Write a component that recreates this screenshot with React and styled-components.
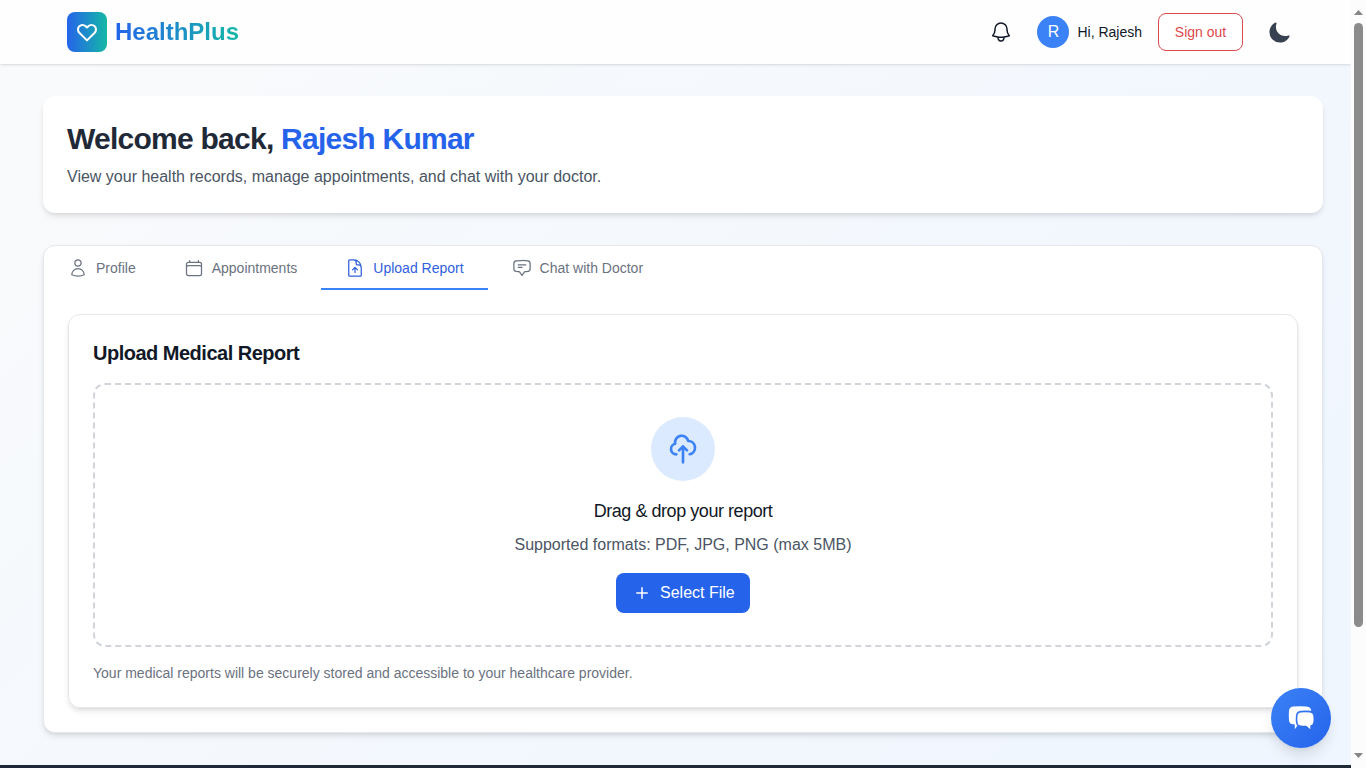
import React from 'react';
import styled, { createGlobalStyle, css } from 'styled-components';
import { HiOutlineHeart, HiOutlineCloudUpload } from 'react-icons/hi';
import {
  HiOutlineBell,
  HiOutlineUser,
  HiOutlineCalendar,
  HiOutlineDocumentArrowUp,
  HiOutlineChatBubbleBottomCenterText,
} from 'react-icons/hi2';
import { IoMoon } from 'react-icons/io5';

const GlobalStyle = createGlobalStyle`
  * { box-sizing: border-box; }
  body {
    margin: 0;
    overflow: hidden;
    font-family: "Liberation Sans", Arial, sans-serif;
    color: #111827;
  }
  h1, h2, h3, p { margin: 0; }
  button { font-family: inherit; cursor: pointer; }
  svg { display: block; flex: none; }
`;

const Window = styled.div`
  display: flex;
  height: 768px;
  overflow: hidden;
`;

const Page = styled.div`
  width: 1351px;
  display: flex;
  flex-direction: column;
  background: linear-gradient(135deg, #f9fafb, #eff6ff);
`;

const Header = styled.header`
  height: 64px;
  flex: none;
  padding: 0 60px 0 67px;
  display: flex;
  align-items: center;
  justify-content: space-between;
  background: #fefefe;
  box-shadow: 0 1px 3px rgba(0, 0, 0, 0.1), 0 1px 2px -1px rgba(0, 0, 0, 0.1);
`;

const Brand = styled.div`
  display: flex;
  align-items: center;
  gap: 8px;
`;

const BrandMark = styled.div`
  width: 40px;
  height: 40px;
  border-radius: 8px;
  display: grid;
  place-items: center;
  color: #fff;
  background: linear-gradient(90deg, #2563eb, #14b8a6);
`;

const BrandName = styled.span`
  font-size: 24px;
  line-height: 32px;
  font-weight: 700;
  color: transparent;
  background: linear-gradient(90deg, #2563eb, #14b8a6);
  background-clip: text;
`;

const Actions = styled.div`
  display: flex;
  align-items: center;
`;

const IconButton = styled.button`
  border: 0;
  padding: 0;
  background: none;
  color: ${(p) => p.$color};
`;

const User = styled.div`
  display: flex;
  align-items: center;
  gap: 8px;
  margin: 0 16px 0 24px;
  font-size: 14px;
`;

const Avatar = styled.span`
  width: 32px;
  height: 32px;
  border-radius: 50%;
  display: grid;
  place-items: center;
  font-size: 16px;
  color: #fff;
  background: #3b82f6;
`;

const SignOut = styled.button`
  width: 85px;
  height: 38px;
  margin-right: 25px;
  padding: 0;
  border: 1px solid #dc4a4f;
  border-radius: 8px;
  background: #fff;
  color: #e0484d;
  font-size: 14px;
`;

const Main = styled.main`
  flex: none;
  height: 701px;
  padding: 32px 28px 0 43px;
  display: flex;
  flex-direction: column;
  gap: 32px;
`;

const cardShadow = css`
  box-shadow: 0 4px 6px -1px rgba(0, 0, 0, 0.1), 0 2px 4px -2px rgba(0, 0, 0, 0.1);
`;

const WelcomeCard = styled.section`
  height: 117px;
  padding: 25px 24px 23px;
  border-radius: 12px;
  background: #fff;
  ${cardShadow}
`;

const WelcomeTitle = styled.h1`
  font-size: 30px;
  line-height: 36px;
  font-weight: 700;
  letter-spacing: -0.75px;
  color: #1f2937;
  span { color: #2563eb; }
`;

const WelcomeText = styled.p`
  margin-top: 8px;
  font-size: 16px;
  line-height: 24px;
  color: #4b5563;
`;

const Panel = styled.section`
  height: 488px;
  border: 1px solid #e5e7eb;
  border-radius: 12px;
  background: #fff;
  ${cardShadow}
`;

const Tabs = styled.nav`
  display: flex;
`;

const Tab = styled.button`
  height: 44px;
  padding: 2px 24px 0;
  display: flex;
  align-items: center;
  gap: 8px;
  border: 0;
  border-bottom: 2px solid ${(p) => (p.$active ? '#3b82f6' : 'transparent')};
  background: none;
  font-size: 14px;
  color: ${(p) => (p.$active ? '#2f61dc' : '#6b7280')};
`;

const ReportCard = styled.section`
  height: 394px;
  margin: 24px 24px 0;
  padding: 24px;
  border: 1px solid #e5e7eb;
  border-radius: 12px;
  ${cardShadow}
`;

const ReportTitle = styled.h2`
  font-size: 20px;
  line-height: 28px;
  font-weight: 700;
  letter-spacing: -0.5px;
`;

const DropZone = styled.div`
  height: 264px;
  margin-top: 16px;
  padding-top: 32px;
  display: flex;
  flex-direction: column;
  align-items: center;
  border: 2px dashed #d1d5db;
  border-radius: 12px;
`;

const UploadBadge = styled.div`
  width: 64px;
  height: 64px;
  border-radius: 50%;
  display: grid;
  place-items: center;
  color: #3b82f6;
  background: #dbeafe;
`;

const DropTitle = styled.h3`
  margin-top: 16px;
  font-size: 18px;
  line-height: 28px;
  font-weight: 400;
  letter-spacing: -0.45px;
`;

const DropHint = styled.p`
  margin: 8px 0 16px;
  font-size: 16px;
  line-height: 24px;
  color: #4b5563;
`;

const SelectFile = styled.button`
  height: 40px;
  width: 134px;
  padding: 0 0 0 16px;
  display: flex;
  align-items: center;
  gap: 8px;
  border: 0;
  border-radius: 8px;
  background: #2563eb;
  color: #fff;
  font-size: 16px;
`;

const Note = styled.p`
  margin-top: 16px;
  font-size: 14px;
  line-height: 20px;
  color: #6b7280;
`;

const Footer = styled.footer`
  flex: none;
  height: 60px;
  background: #1f2937;
`;

const ChatButton = styled.button`
  position: fixed;
  left: 1271px;
  top: 688px;
  width: 60px;
  height: 60px;
  padding: 0;
  border: 0;
  border-radius: 50%;
  display: grid;
  place-items: center;
  color: #fff;
  background: linear-gradient(135deg, #3b82f6, #2563eb);
  box-shadow: 0 10px 15px -3px rgba(0, 0, 0, 0.12), 0 4px 6px -4px rgba(0, 0, 0, 0.1);
`;

const Scrollbar = styled.div`
  width: 15px;
  padding: 10px 0 10px;
  display: flex;
  flex-direction: column;
  align-items: center;
  background: #fcfcfc;
`;

const Thumb = styled.div`
  width: 9px;
  height: 604px;
  margin: 8px 0 auto;
  border-radius: 5px;
  background: #8b8b8b;
`;

const tabs = [
  { label: 'Profile', Icon: HiOutlineUser },
  { label: 'Appointments', Icon: HiOutlineCalendar },
  { label: 'Upload Report', Icon: HiOutlineDocumentArrowUp, active: true },
  { label: 'Chat with Doctor', Icon: HiOutlineChatBubbleBottomCenterText },
];

export default function App() {
  return (
    <Window>
      <GlobalStyle />
      <Page>
        <Header>
          <Brand>
            <BrandMark><HiOutlineHeart size={24} /></BrandMark>
            <BrandName>HealthPlus</BrandName>
          </Brand>
          <Actions>
            <IconButton $color="#111827" aria-label="Notifications"><HiOutlineBell size={24} /></IconButton>
            <User><Avatar>R</Avatar>Hi, Rajesh</User>
            <SignOut>Sign out</SignOut>
            <IconButton $color="#374151" aria-label="Dark mode"><IoMoon size={23} /></IconButton>
          </Actions>
        </Header>
        <Main>
          <WelcomeCard>
            <WelcomeTitle>Welcome back, <span>Rajesh Kumar</span></WelcomeTitle>
            <WelcomeText>View your health records, manage appointments, and chat with your doctor.</WelcomeText>
          </WelcomeCard>
          <Panel>
            <Tabs>
              {tabs.map(({ label, Icon, active }) => (
                <Tab key={label} $active={active}><Icon size={20} />{label}</Tab>
              ))}
            </Tabs>
            <ReportCard>
              <ReportTitle>Upload Medical Report</ReportTitle>
              <DropZone>
                <UploadBadge><HiOutlineCloudUpload size={32} /></UploadBadge>
                <DropTitle>Drag &amp; drop your report</DropTitle>
                <DropHint>Supported formats: PDF, JPG, PNG (max 5MB)</DropHint>
                <SelectFile>
                  <svg width="20" height="20" viewBox="0 0 20 20" stroke="currentColor" strokeWidth="1.5" strokeLinecap="round">
                    <path d="M10 4.8v10.400M4.800 10h10.400" />
                  </svg>
                  Select File
                </SelectFile>
              </DropZone>
              <Note>Your medical reports will be securely stored and accessible to your healthcare provider.</Note>
            </ReportCard>
          </Panel>
        </Main>
        <Footer />
      </Page>
      <Scrollbar>
        <svg width="9" height="5" viewBox="0 0 9 5" fill="#858585"><path d="M4.5 0 9 5H0z" /></svg>
        <Thumb />
        <svg width="9" height="5" viewBox="0 0 9 5" fill="#858585"><path d="M0 0h9L4.500 5z" /></svg>
      </Scrollbar>
      <ChatButton aria-label="Open chat">
        <svg width="26" height="26" viewBox="0 0 26 26" fill="currentColor">
          <path d="M5.500 1.500Q12 1 18.500 1.500Q22.800 1.800 23.300 5.800Q17 5.200 12.500 5.700Q8.300 6.200 7.900 10.500Q7.500 15 8 18Q8.300 19.600 9.500 20.600L6.800 24.300V19.500L5 19.300Q1.500 19 1 15.500Q.5 10 1 5.500Q1.500 1.800 5.500 1.500z" />
          <path d="M13 7.500Q17.500 7 22 7.500Q24.900 7.800 25.300 10.500Q25.800 14 25.300 17.500Q24.900 20 22.300 20.400V24.300L18.300 20.700Q15.500 20.900 13 20.600Q9.800 20.300 9.500 17.500Q9.100 14 9.500 10.500Q9.900 7.800 13 7.500z" />
        </svg>
      </ChatButton>
    </Window>
  );
}
